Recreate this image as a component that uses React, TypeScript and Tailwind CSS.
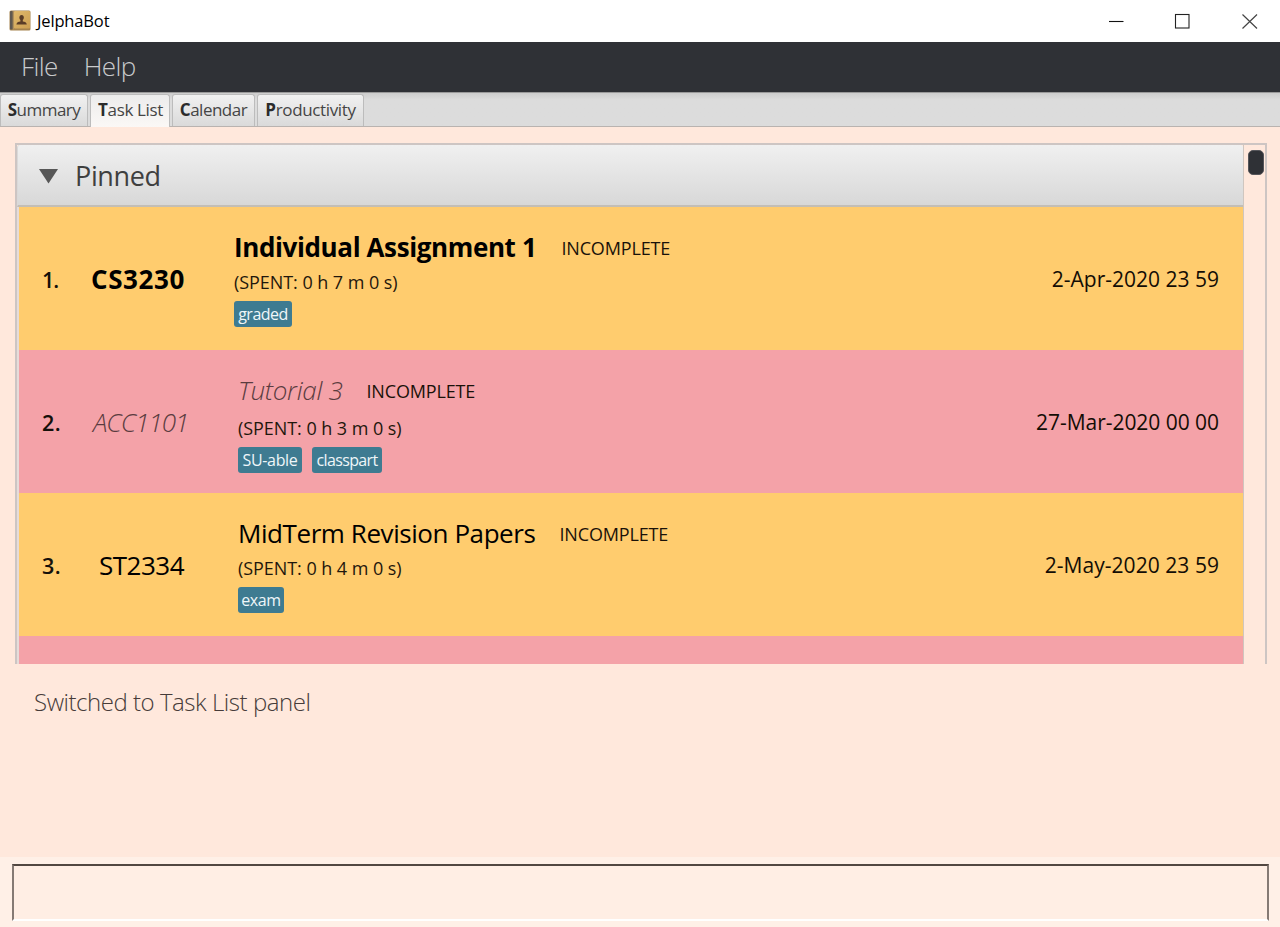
type Task = {
  no: number;
  noClass: string;
  module: string;
  moduleClass: string;
  title: string;
  titleClass: string;
  spent: string;
  infoClass: string;
  spentClass: string;
  tags: { label: string; className: string }[];
  due: string;
  dueClass: string;
  rowClass: string;
};

const tasks: Task[] = [
  {
    no: 1,
    noClass: "tracking-[-1px]",
    module: "CS3230",
    moduleClass: "-ml-px font-bold tracking-[0.6px] text-black",
    title: "Individual Assignment 1",
    titleClass: "mr-[25px] font-bold tracking-[-0.38px] text-black",
    spent: "(SPENT: 0 h 7 m 0 s)",
    infoClass: "ml-0",
    spentClass: "mt-[5px]",
    tags: [{ label: "graded", className: "w-[58px] tracking-[-0.5px]" }],
    due: "2-Apr-2020 23 59",
    dueClass: "tracking-normal",
    rowClass: "bg-[#ffcc6e]",
  },
  {
    no: 2,
    noClass: "tracking-[0.4px]",
    module: "ACC1101",
    moduleClass: "ml-px font-light italic tracking-[-1px] text-[#5a3c3f]",
    title: "Tutorial 3",
    titleClass: "mr-[24px] font-light italic tracking-[-0.3px] text-[#5a3c3f]",
    spent: "(SPENT: 0 h 3 m 0 s)",
    infoClass: "ml-1",
    spentClass: "mt-2",
    tags: [
      { label: "SU-able", className: "w-[64px] tracking-[-0.35px]" },
      { label: "classpart", className: "w-[70px] tracking-[-0.65px]" },
    ],
    due: "27-Mar-2020 00 00",
    dueClass: "tracking-[-0.04px]",
    rowClass: "bg-[#f4a2a8]",
  },
  {
    no: 3,
    noClass: "tracking-[0.4px]",
    module: "ST2334",
    moduleClass: "ml-[7px] tracking-[-0.5px] text-black",
    title: "MidTerm Revision Papers",
    titleClass: "mr-[24px] tracking-[-0.43px] text-black",
    spent: "(SPENT: 0 h 4 m 0 s)",
    infoClass: "ml-1",
    spentClass: "mt-[5px]",
    tags: [{ label: "exam", className: "w-[46px] tracking-[-0.4px]" }],
    due: "2-May-2020 23 59",
    dueClass: "tracking-[0.05px]",
    rowClass: "bg-[#ffcc6e]",
  },
];

const tabs = [
  { first: "S", rest: "ummary", width: "w-[88px] mr-[2px]", text: "tracking-[-0.5px]", active: false },
  { first: "T", rest: "ask List", width: "w-[80px] mr-[2px]", text: "pl-px tracking-[-0.35px]", active: true },
  { first: "C", rest: "alendar", width: "w-[83px] mr-[2px]", text: "tracking-[-0.5px]", active: false },
  { first: "P", rest: "roductivity", width: "w-[107px]", text: "tracking-[-0.35px]", active: false },
];

function BookIcon() {
  return (
    <svg width="22" height="21" viewBox="0 0 22 21" className="-mt-[2px] mr-[6px] ml-[9px]">
      <defs>
        <linearGradient id="cover" x1="0" y1="0" x2="1" y2="1">
          <stop offset="0" stopColor="#e0b96c" />
          <stop offset="1" stopColor="#cda052" />
        </linearGradient>
      </defs>
      <rect x="0.5" y="0.5" width="21" height="20" rx="1.5" fill="#a5834f" />
      <rect x="5" y="1" width="16" height="17.500" rx="1" fill="url(#cover)" />
      <rect x="1" y="1" width="2.800" height="18.500" rx="1" fill="#5f5850" />
      <rect x="3.800" y="1" width="1.200" height="18.500" fill="#b0905c" />
      <ellipse cx="12.600" cy="7.600" rx="2.200" ry="2.700" fill="#5a3d27" />
      <path d="M11.400 9.500h2.400v2c2.200.300 3.800.900 4 2.900H7.400c.200-2 1.800-2.600 4-2.900z" fill="#5a3d27" />
    </svg>
  );
}

function TitleBar() {
  return (
    <header className="flex h-[42px] shrink-0 items-center bg-white">
      <BookIcon />
      <span className="mt-px flex-1 text-[16.5px] tracking-[-0.15px] text-black">JelphaBot</span>
      <svg width="160" height="20" viewBox="0 0 160 20" fill="none" className="-mt-px mr-[16px]">
        <path d="M5 10.500h14.500" stroke="#111" strokeWidth="1.100" />
        <rect x="71.500" y="3.500" width="13.500" height="13.500" stroke="#222" strokeWidth="1.100" />
        <path d="M138.500 3.500l14.500 14M153 3.500l-14.500 14" stroke="#444" strokeWidth="1.200" />
      </svg>
    </header>
  );
}

function TaskRow({ task }: { task: Task }) {
  return (
    <div className={`flex h-[143px] shrink-0 items-center pt-[2px] pr-[24px] pl-[23px] text-[26px] ${task.rowClass}`}>
      <span className={`w-[50px] text-[21.500px] font-semibold text-[#15100a] ${task.noClass}`}>{task.no}.</span>
      <div className="w-[142px] whitespace-nowrap">
        <span className={`block ${task.moduleClass}`}>{task.module}</span>
      </div>
      <div className={`flex-1 self-start pt-[20px] ${task.infoClass}`}>
        <div className="mb-px flex h-[36px] items-center leading-[36px]">
          <span className={task.titleClass}>{task.title}</span>
          <span className="mt-[2px] text-[18px] tracking-[-0.15px] text-[#1a1209]">INCOMPLETE</span>
        </div>
        <div className={`h-6 text-[18px] leading-6 tracking-[-0.06px] text-[#1f170c] ${task.spentClass}`}>{task.spent}</div>
        <div className="mt-[6.500px] flex gap-[10px]">
          {task.tags.map((tag) => (
            <span
              key={tag.label}
              className={`h-[26px] rounded-[3px] bg-[#3e7b91] text-center text-[16px] leading-[26px] text-[#eef6f9] ${tag.className}`}
            >
              {tag.label}
            </span>
          ))}
        </div>
      </div>
      <span className={`text-[21px] text-[#130d05] ${task.dueClass}`}>{task.due}</span>
    </div>
  );
}

export default function App() {
  return (
    <div className="flex h-[927px] w-[1280px] flex-col overflow-hidden bg-[#ffe8dc] font-['Open_Sans',sans-serif]">
      <TitleBar />
      <nav className="flex h-[50px] shrink-0 items-center gap-[26px] bg-[#2f3136] pb-[2px] pl-[21px] text-[26px] font-light tracking-[-0.6px] text-[#c9cacc]">
        <span>File</span>
        <span>Help</span>
      </nav>

      <div className="flex h-[35px] shrink-0 border-t border-b border-t-[#9a9a9a] border-b-[#b9b3b0] bg-linear-to-b from-[#cdcdcd] via-[#dcdcdc] via-20% to-[#dcdcdc]">
        {tabs.map((tab) => (
          <div
            key={tab.first}
            className={`mt-px flex items-center justify-center rounded-t-[3px] border-x border-t border-[#bcbcbc] text-[17px] text-[#454545] ${tab.width} ${
              tab.active ? "-mb-px bg-linear-to-b from-[#ececec] to-[#fbf8f6] pb-[2px]" : "bg-linear-to-b from-[#f1f1f1] to-[#dadada] pb-px"
            }`}
          >
            <span className={tab.text}>
              <b className="text-[#2b2b2b]">{tab.first}</b>
              {tab.rest}
            </span>
          </div>
        ))}
      </div>

      <main className="mt-4 mr-[13px] ml-[15px] flex h-[521px] shrink-0 overflow-hidden border-t-2 border-r-2 border-l-2 border-[#cdc5c3]">
        <section className="flex w-[1227px] flex-col overflow-hidden border-r border-[#cfc6bf]">
          <h2 className="flex h-[62.400px] shrink-0 items-center rounded-t-[3px] border-b-2 border-l border-b-[#c3beb6] border-l-[#d9d9d9] bg-linear-to-b from-[#f0f0f0] to-[#d8d8d8] pt-[3px] pl-[21px] text-[27px] tracking-[-0.35px] text-[#3f3f3f]">
            <svg width="19" height="15" viewBox="0 0 19 15" className="mr-[17px]">
              <path d="M0 0h19l-9.500 14.500z" fill="#575757" />
            </svg>
            Pinned
          </h2>
          <div className="flex flex-col border-l-2 border-[#e6dcda]">
            {tasks.map((task) => (
              <TaskRow key={task.no} task={task} />
            ))}
            <div className="h-[143px] shrink-0 bg-[#f4a2a8]" />
          </div>
        </section>
        <div className="flex flex-1 justify-center pt-[5px] pl-[2px]">
          <div className="h-[25px] w-4 rounded-[5px] border border-[#55555a] bg-[#2f3136]" />
        </div>
      </main>

      <p className="mt-[20px] ml-[34px] h-9 text-[24px] leading-9 font-light tracking-[-0.46px] text-[#463b39]">
        Switched to Task List panel
      </p>

      <footer className="mt-auto h-[70px] bg-[#fff0e7] pt-[7px] pr-[11px] pl-[12px]">
        <div className="h-[57px] border-x-2 border-t-2 border-b-2 border-x-[#857a74] border-t-[#524741] border-b-white bg-[#ffeee4]" />
      </footer>
    </div>
  );
}
